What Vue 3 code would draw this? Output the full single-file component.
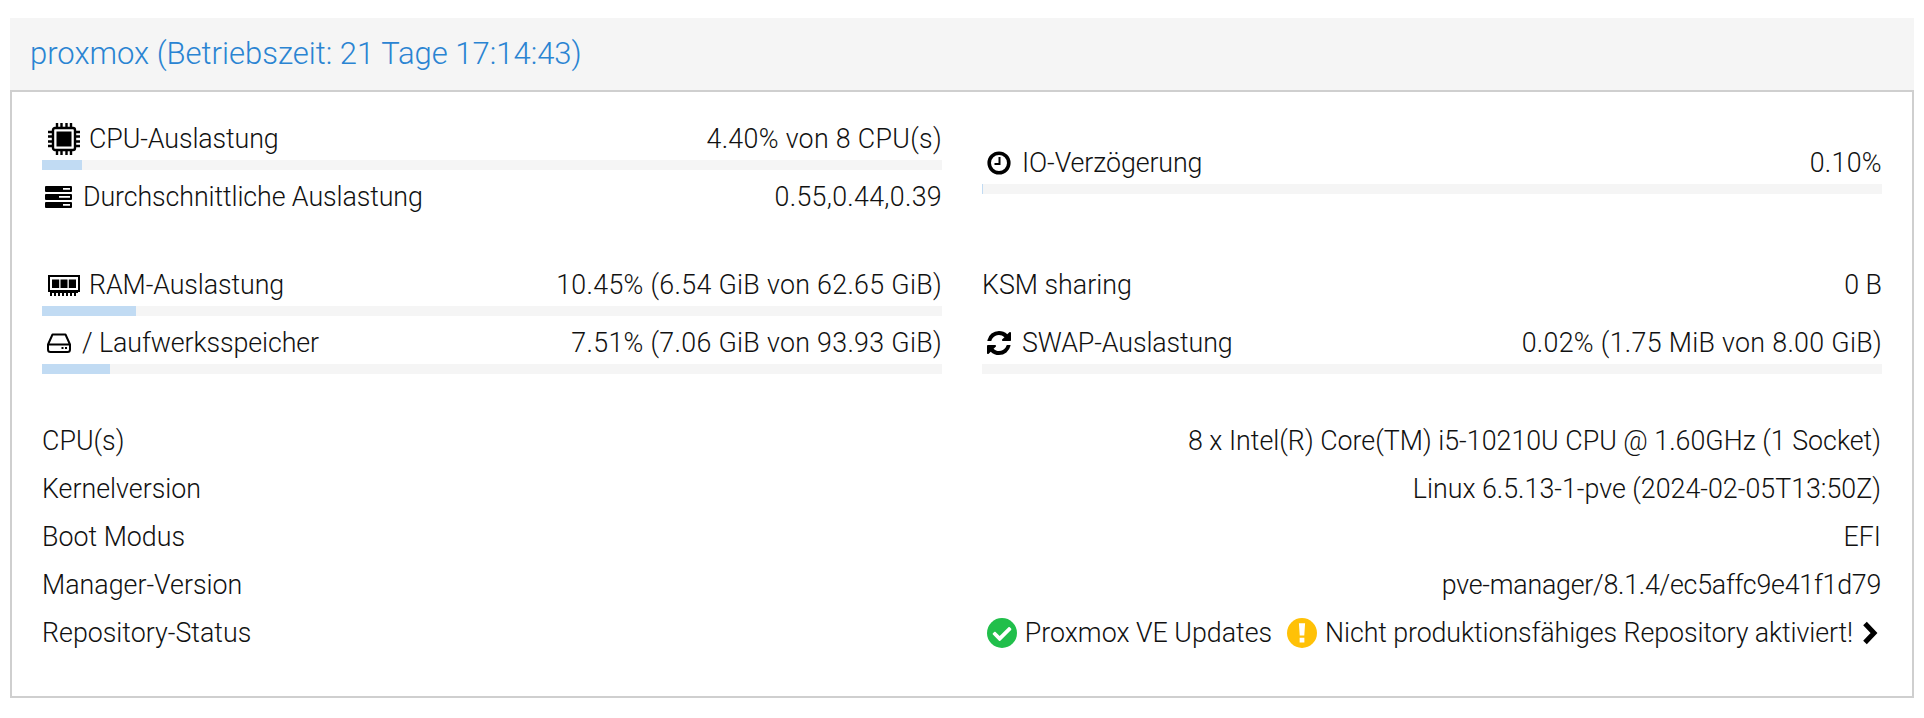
<script setup>
const infoRows = [
  { label: 'CPU(s)', value: '8 x Intel(R) Core(TM) i5-10210U CPU @ 1.60GHz (1 Socket)' },
  { label: 'Kernelversion', value: 'Linux 6.5.13-1-pve (2024-02-05T13:50Z)' },
  { label: 'Boot Modus', value: 'EFI' },
  { label: 'Manager-Version', value: 'pve-manager/8.1.4/ec5affc9e41f1d79', narrow: true }
]
</script>

<template>
  <div class="panel">
    <div class="panel-header">proxmox (Betriebszeit: 21 Tage 17:14:43)</div>
    <div class="panel-body">
      <div class="grid">
        <div class="col">
          <div class="item">
            <div class="line">
              <span class="name">
                <svg class="icon cpu" viewBox="0 0 32 32">
                  <rect x="5" y="5" width="22" height="22" rx="2" fill="none" stroke="#000" stroke-width="2.400" />
                  <rect x="8.5" y="8.5" width="15" height="15" fill="#000" />
                  <path d="M9 0v4M13.500 0v4M18.500 0v4M23 0v4M9 28v4M13.500 28v4M18.500 28v4M23 28v4M0 9h4M0 13.500h4M0 18.500h4M0 23h4M28 9h4M28 13.500h4M28 18.500h4M28 23h4" stroke="#000" stroke-width="2.400" />
                </svg>
                CPU-Auslastung
              </span>
              <span class="metric">4.40% von 8 CPU(s)</span>
            </div>
            <div class="bar"><div class="fill" style="width: 4.4%"></div></div>
          </div>
          <div class="line">
            <span class="name tight">
              <svg class="icon load" viewBox="0 0 27 22">
                <path d="M0 1a1 1 0 0 1 1-1h25a1 1 0 0 1 1 1v4a1 1 0 0 1-1 1H1a1 1 0 0 1-1-1zM0 9a1 1 0 0 1 1-1h25a1 1 0 0 1 1 1v4a1 1 0 0 1-1 1H1a1 1 0 0 1-1-1zM0 17a1 1 0 0 1 1-1h25a1 1 0 0 1 1 1v4a1 1 0 0 1-1 1H1a1 1 0 0 1-1-1z" fill="#000" />
                <path d="M18 2h7v1.800h-7zM14 10h11v1.800H14zM18 18h7v1.800h-7z" fill="#fff" />
              </svg>
              Durchschnittliche Auslastung
            </span>
            <span class="metric">0.55,0.44,0.39</span>
          </div>
        </div>

        <div class="col io">
          <div class="item">
            <div class="line">
              <span class="name tight">
                <svg class="icon clock" viewBox="0 0 24 24">
                  <circle cx="12" cy="12" r="9.800" fill="none" stroke="#000" stroke-width="3.600" />
                  <path d="M12.500 6v7H7.500" fill="none" stroke="#000" stroke-width="2" />
                </svg>
                IO-Verzögerung
              </span>
              <span class="metric">0.10%</span>
            </div>
            <div class="bar"><div class="fill" style="width: 0.1%"></div></div>
          </div>
        </div>

        <div class="col second">
          <div class="item">
            <div class="line">
              <span class="name">
                <svg class="icon ram" viewBox="0 0 32 21">
                  <rect x="1" y="1" width="30" height="15" fill="none" stroke="#000" stroke-width="2" />
                  <path d="M4 4.500h7.200v8.500H4zM12.500 4.500h7v8.500h-7zM20.800 4.500H28v8.500h-7.200z" fill="#000" />
                  <path d="M2 16h28v2H2z" fill="#000" />
                  <path d="M3 18v3M7 18v3M11 18v3M15 18v3M19 18v3M23 18v3M27 18v3" stroke="#000" stroke-width="2" />
                </svg>
                RAM-Auslastung
              </span>
              <span class="metric">10.45% (6.54 GiB von 62.65 GiB)</span>
            </div>
            <div class="bar"><div class="fill" style="width: 10.45%"></div></div>
          </div>
          <div class="item">
            <div class="line">
              <span class="name tight">
                <svg class="icon disk" viewBox="0 0 24 20">
                  <path d="M1 11.500L5.500 1.500h13l4.500 10v5a2.500 2.500 0 0 1-2.500 2.500h-17A2.500 2.500 0 0 1 1 16.500zM1 11.500h22" fill="none" stroke="#000" stroke-width="2" stroke-linejoin="round" />
                  <path d="M14.500 14h2v2h-2zM18 14h2v2h-2z" fill="#000" />
                </svg>
                / Laufwerksspeicher
              </span>
              <span class="metric">7.51% (7.06 GiB von 93.93 GiB)</span>
            </div>
            <div class="bar"><div class="fill" style="width: 7.51%"></div></div>
          </div>
        </div>

        <div class="col second">
          <div class="line">
            <span>KSM sharing</span>
            <span>0 B</span>
          </div>
          <div class="item ksm-next">
            <div class="line">
              <span class="name tight">
                <svg class="icon swap" viewBox="128 128 1536 1536">
                  <path d="M1639 1056q0 5-1 7-64 268-268 434.500t-478 166.500q-146 0-282.500-55t-243.500-157l-129 129q-19 19-45 19t-45-19-19-45v-448q0-26 19-45t45-19h448q26 0 45 19t19 45-19 45l-137 137q71 66 161 102t187 36q134 0 250-65t186-179q11-17 53-117 8-23 30-23h192q13 0 22.500 9.500t9.500 22.500zm25-800v448q0 26-19 45t-45 19h-448q-26 0-45-19t-19-45 19-45l138-138q-148-137-349-137-134 0-250 65t-186 179q-11 17-53 117-8 23-30 23h-199q-13 0-22.500-9.500t-9.500-22.500v-7q65-268 270-434.500t480-166.500q146 0 284 55.500t245 156.500l130-129q19-19 45-19t45 19 19 45z" fill="#000" />
                </svg>
                SWAP-Auslastung
              </span>
              <span class="metric">0.02% (1.75 MiB von 8.00 GiB)</span>
            </div>
            <div class="bar"></div>
          </div>
        </div>
      </div>

      <div class="info">
        <div v-for="row in infoRows" :key="row.label" class="line">
          <span>{{ row.label }}</span>
          <span :class="{ narrow: row.narrow }">{{ row.value }}</span>
        </div>
        <div class="line">
          <span>Repository-Status</span>
          <span class="repo">
            <svg class="status" viewBox="0 0 512 512">
              <circle cx="256" cy="256" r="256" fill="#21bf4b" />
              <path d="M227.314 387.314l184-184c6.248-6.248 6.248-16.379 0-22.627l-22.627-22.627c-6.248-6.249-16.379-6.249-22.628 0L216 308.118l-70.059-70.059c-6.248-6.248-16.379-6.248-22.628 0l-22.627 22.627c-6.248 6.248-6.248 16.379 0 22.627l104 104c6.249 6.249 16.379 6.249 22.628.001z" fill="#fff" />
            </svg>
            <span class="repo-text">Proxmox VE Updates</span>
            <svg class="status warn" viewBox="0 0 29 29">
              <circle cx="14.500" cy="14.500" r="14.500" fill="#ffc107" />
              <path d="M11.500 5h6l-.8 12h-4.400zM12.200 19h4.600v4.600h-4.600z" fill="#fff" />
            </svg>
            <span class="repo-text warn-text">Nicht produktionsfähiges Repository aktiviert!</span>
            <svg class="chevron" viewBox="0 0 16 24">
              <path d="M3 2.500L12 12l-9 9.500" fill="none" stroke="#000" stroke-width="5" />
            </svg>
          </span>
        </div>
      </div>
    </div>
  </div>
</template>

<style>
html, body {
  margin: 0;
  background: #fff;
}
</style>

<style scoped>
.panel {
  margin: 18px 10px 0;
  width: 1904px;
  font-family: Roboto, "Liberation Sans", sans-serif;
  font-weight: 300;
  font-size: 26.8px;
  color: #111;
}

.panel-header {
  height: 72px;
  line-height: 72px;
  padding-left: 20px;
  background: #f5f5f5;
  color: #2a84d2;
  font-size: 31px;
}

.panel-body {
  height: 608px;
  box-sizing: border-box;
  border: 2px solid #cfcfcf;
  padding: 30px;
}

.grid {
  display: grid;
  grid-template-columns: 900px 900px;
  column-gap: 40px;
  row-gap: 54px;
}

.col {
  display: flex;
  flex-direction: column;
  gap: 10px;
}

.io {
  padding-top: 24px;
}

.ksm-next {
  margin-top: 14px;
}

.line {
  display: flex;
  justify-content: space-between;
  align-items: center;
  height: 34px;
  line-height: 34px;
  white-space: nowrap;
}

.metric {
  letter-spacing: 0.3px;
}

.narrow {
  letter-spacing: -0.25px;
}

.bar {
  height: 10px;
  margin-top: 4px;
  background: #f5f5f5;
}

.fill {
  height: 100%;
  background: #c1dbf3;
}

.name {
  display: flex;
  align-items: center;
  gap: 9px;
  padding-left: 6px;
  letter-spacing: -0.1px;
}

.name.tight {
  gap: 11px;
  padding-left: 3px;
}

.icon {
  display: block;
  flex: none;
}

.cpu {
  width: 32px;
  height: 32px;
}

.load {
  width: 27px;
  height: 22px;
}

.clock {
  width: 24px;
  height: 24px;
  margin-left: 2px;
}

.ram {
  width: 32px;
  height: 21px;
}

.disk {
  width: 24px;
  height: 20px;
  margin-left: 2px;
}

.swap {
  width: 24px;
  height: 24px;
  margin-left: 2px;
}

.info {
  display: flex;
  flex-direction: column;
  gap: 14px;
  margin-top: 50px;
  padding-right: 1px;
}

.repo {
  display: flex;
  align-items: center;
  padding-right: 3px;
}

.status {
  display: block;
  width: 30px;
  height: 30px;
}

.repo-text {
  margin-left: 8px;
}

.warn-text {
  letter-spacing: -0.1px;
}

.warn {
  margin-left: 15px;
}

.chevron {
  display: block;
  width: 16px;
  height: 24px;
  margin-left: 9px;
}
</style>
